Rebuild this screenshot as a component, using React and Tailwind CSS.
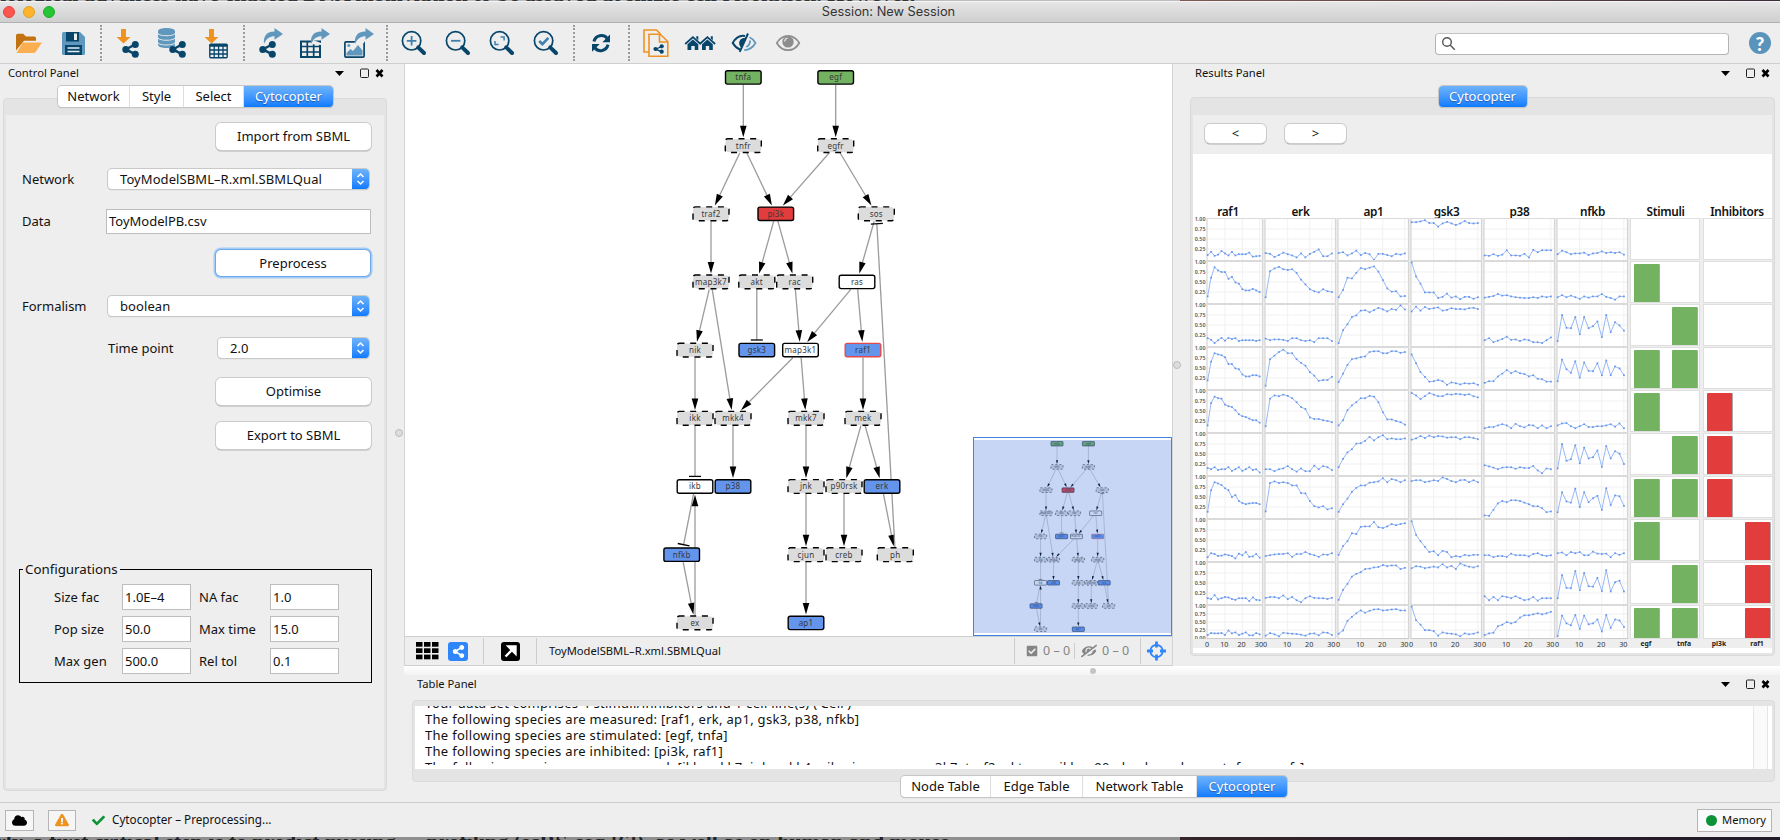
import React from "react";
import { FaCloud, FaCheck, FaExclamationTriangle, FaShareAlt, FaCheckSquare, FaEyeSlash } from "react-icons/fa";

const NAVY = "#08456b";
const SKY = "#5f97bd";
const ORANGE = "#ee9322";

/* ---------- toolbar icons ---------- */

function Icon({ x, w, className, children }) {
  return (
    <svg className={"shrink-0 " + className} width={w} height="36" viewBox={`${x} 25 ${w} 36`} fill="none">
      {children}
    </svg>
  );
}

function Sep({ className }) {
  return <div className={"h-9 w-0 shrink-0 border-l-2 border-dotted border-[#9a9a9a] " + className} />;
}

function Share({ x, y }) {
  return (
    <g transform={`translate(${x} ${y})`} fill={NAVY} stroke={NAVY}>
      <path d="M13.4 3.6 3.8 8.7l9.6 5" strokeWidth="2.4" fill="none" />
      <circle cx="3.8" cy="8.7" r="3.5" stroke="none" />
      <circle cx="13.3" cy="3.7" r="3.5" stroke="none" />
      <circle cx="13.3" cy="13.5" r="3.5" stroke="none" />
    </g>
  );
}

function DownArrow({ x }) {
  return <path d={`M${x + 4.5} 29h5v8h4.5l-7 6.5-7-6.5h4.5z`} fill={ORANGE} />;
}

function CurvedArrow({ x }) {
  return <path d={`M${x} 44c-.6-7 1.500-12.500 10.500-12.500V28l8.500 6-8.500 5.800v-3.600c-4.500 0-8 1.800-10.500 7.800z`} fill={SKY} />;
}

function Lens({ x, children }) {
  return (
    <g>
      <circle cx={x + 9.6} cy="40.800" r="9.200" stroke={NAVY} strokeWidth="1.700" />
      <path d={`M${x + 16.200} 47.400l5.800 5.600`} stroke={NAVY} strokeWidth="4" strokeLinecap="round" />
      {children}
    </g>
  );
}

function Toolbar() {
  return (
    <div className="flex h-[41px] shrink-0 items-center border-b border-[#cfcfcf] bg-[#eeeeee]">
      <Icon x={14} w={30} className="ml-[14px]">
        <path d="M16 50.500V35.500q0-1.700 1.700-1.700h5.500l2.700 2.700h8.400q1.700 0 1.700 1.700v2.600H24z" fill="#c27211" />
        <path d="M16.500 53l6.200-10.500H42L35.600 52q-.6 1-1.700 1z" fill="#fbae4f" />
      </Icon>
      <Icon x={60} w={26} className="ml-4">
        <path d="M62 33.500q0-1.500 1.500-1.500H80l5 5v16.500q0 1.500-1.500 1.500h-20Q62 55 62 53.500z" fill={SKY} />
        <path d="M66 32h13v9.500H66zM65 45h17v10H65z" fill={NAVY} />
        <path d="M74 33.500h3v6.500h-3z" fill="#eee" />
        <path d="M67.500 48h12M67.500 51.500h12" stroke="#e7eff5" strokeWidth="1.400" />
      </Icon>
      <Sep className="ml-[14px]" />
      <Icon x={115} w={26} className="ml-[13px]">
        <DownArrow x={116.500} />
        <Share x={122} y={40.700} />
      </Icon>
      <Icon x={156} w={32} className="ml-[15px]">
        <path d="M158 31.300c0-4.400 17-4.400 17 0v13.400c0 4.400-17 4.400-17 0z" fill={SKY} />
        <path d="M158 33.500c2 3 15 3 17 0M158 38c2 3 15 3 17 0M158 42.700c2 3 15 3 17 0" stroke="#eee" strokeWidth="1.100" />
        <Share x={169} y={40.700} />
      </Icon>
      <Icon x={202} w={28} className="ml-[14px]">
        <DownArrow x={204.500} />
        <rect x="209.800" y="44.300" width="17.400" height="13.400" rx="1" stroke={NAVY} strokeWidth="1.400" fill="#eee" />
        <path d="M209.500 45.500h18" stroke={NAVY} strokeWidth="2.500" />
        <path d="M210 50h17M210 54h17M214.200 45v13M218.600 45v13M223 45v13" stroke={NAVY} strokeWidth="1.300" />
      </Icon>
      <Sep className="ml-[13px]" />
      <Icon x={257} w={28} className="ml-[12px]">
        <CurvedArrow x={264} />
        <Share x={259} y={40.700} />
      </Icon>
      <Icon x={298} w={34} className="ml-[13px]">
        <rect x="301" y="41.500" width="19" height="15.500" stroke={NAVY} strokeWidth="2" />
        <path d="M301 46.500h19M301 52h19M307.300 42v15M313.700 42v15" stroke={NAVY} strokeWidth="1.700" />
        <path d="M311 44l2-4 8 3v2z" fill="#eee" />
        <CurvedArrow x={311} />
      </Icon>
      <Icon x={342} w={34} className="ml-[10px]">
        <rect x="344.900" y="41.900" width="19.200" height="15.200" stroke={NAVY} strokeWidth="1.700" rx="1" />
        <circle cx="348.800" cy="45.600" r="1.500" fill={SKY} />
        <path d="M346.500 55.500v-2.500l4-4 2.500 2 5-6 4.500 5.500v5z" fill={SKY} />
        <path d="M354 44l2-4 8 0v3z" fill="#eee" />
        <CurvedArrow x={355} />
      </Icon>
      <Sep className="ml-[10px]" />
      <Icon x={400} w={28} className="ml-[12px]">
        <Lens x={402}>
          <path d="M411.600 36v9.600M406.800 40.800h9.600" stroke="#3f7fae" strokeWidth="1.800" />
        </Lens>
      </Icon>
      <Icon x={444} w={28} className="ml-4">
        <Lens x={446}>
          <path d="M451 40.800h9.400" stroke="#3f7fae" strokeWidth="1.800" />
        </Lens>
      </Icon>
      <Icon x={488} w={28} className="ml-4">
        <Lens x={490}>
          <path d="M500.500 37h3.600v3.600M498.600 44.600H495V41" stroke="#3f7fae" strokeWidth="1.500" />
        </Lens>
      </Icon>
      <Icon x={532} w={28} className="ml-4">
        <Lens x={534}>
          <path d="M539.200 41l3.200 3.200 6-6.400" stroke="#3f7fae" strokeWidth="2.600" />
        </Lens>
      </Icon>
      <Sep className="ml-[13px]" />
      <Icon x={590} w={22} className="ml-[15px]">
        <path d="M594 41.500c1.500-6.500 9.500-7.800 13-3.300" stroke={NAVY} strokeWidth="3" />
        <path d="M610 34.500v7.700h-7.700z" fill={NAVY} />
        <path d="M608 44.700c-1.500 6.500-9.500 7.800-13 3.300" stroke={NAVY} strokeWidth="3" />
        <path d="M592 51.700V44h7.700z" fill={NAVY} />
      </Icon>
      <Sep className="ml-4" />
      <Icon x={641} w={28} className="ml-[11px]">
        <path d="M650 52h-6V30h12.500l4 4" stroke={ORANGE} strokeWidth="1.600" />
        <path d="M649 34.200v22h18.800V41.500l-7.600-7.300z" fill="#eee" stroke={ORANGE} strokeWidth="1.600" />
        <path d="M659.500 34.500v7.500h8" stroke={ORANGE} strokeWidth="1.600" />
        <path d="M662 46.500l-6.500 2.700 6.500 2.600" stroke={NAVY} strokeWidth="1.300" />
        <g fill={NAVY}>
          <circle cx="655.500" cy="49" r="2.100" />
          <circle cx="661.700" cy="46.300" r="2.100" />
          <circle cx="661.700" cy="51.700" r="2.100" />
        </g>
      </Icon>
      <Icon x={684} w={32} className="ml-[15px]">
        {[0, 14.500].map((d) => (
          <g key={d} transform={`translate(${d} 0)`}>
            <path d="M685.200 44l7.700-6.800 7.700 6.800" stroke={NAVY} strokeWidth="1.800" />
            <path d="M687.500 44.200l5.400-4.700 5.400 4.700v5.800h-3.600v-4h-3.400v4h-3.800zM696.300 36.200h2v4l-2-1.800z" fill={NAVY} />
          </g>
        ))}
      </Icon>
      <Icon x={730} w={28} className="ml-[14px]">
        <path d="M745 36c-5-.9-9.500 2-12.300 7 2 3.200 4 5.300 7.500 6.600" stroke={NAVY} strokeWidth="2" />
        <path d="M745.500 38c-4-.6-6.500 2-6.300 5.400.1 1.600.8 3 2 4z" fill={NAVY} />
        <path d="M748 33.500l-8.300 18.300" stroke={NAVY} strokeWidth="2" />
        <path d="M749.500 37.200c3 1.300 4.800 3.400 6 5.800-2.400 4.200-6 7-11.300 7.100M750 40.500c.2 3-1 5-3.700 6.600" stroke={SKY} strokeWidth="1.700" />
      </Icon>
      <Icon x={774} w={28} className="ml-4">
        <path d="M776.800 43c5.500-9.600 17-9.600 22.500 0-5.500 9.600-17 9.600-22.500 0z" stroke="#8d8d8d" strokeWidth="1.700" />
        <circle cx="788" cy="41.900" r="5.700" fill="#8d8d8d" />
        <path d="M784.600 41.500q.3-3 3-3.300" stroke="#eee" strokeWidth="1.100" />
      </Icon>
      <div className="ml-auto mt-[1px] flex h-[22px] w-[294px] shrink-0 items-center rounded-[4px] border border-[#b4b4b4] border-t-[#c4c4c4] bg-white pl-[5px]">
        <svg width="15" height="15" viewBox="0 0 15 15" fill="none" stroke="#555" strokeWidth="1.400">
          <circle cx="6" cy="6" r="4.300" />
          <path d="M9.300 9.300l4.500 4.500" />
        </svg>
      </div>
      <div className="mr-[9px] ml-5 flex size-[22px] items-center justify-center rounded-full bg-[#5b94bb] font-['Lato',sans-serif] text-[19px] leading-none font-black text-white">
        ?
      </div>
    </div>
  );
}

/* ---------- shared controls ---------- */

function PanelHeader({ title, className = "" }) {
  return (
    <div className={"flex shrink-0 items-center text-[11.200px] " + className}>
      <span>{title}</span>
      <svg className="ml-auto" width="50" height="14" viewBox="0 0 50 14">
        <path d="M0 5h9l-4.500 5z" fill="#000" />
        <rect x="25.500" y="3" width="8" height="8.500" rx="1" fill="none" stroke="#222" />
        <path d="M41.500 4l6 6.500M47.500 4l-6 6.500" stroke="#000" strokeWidth="2.600" />
      </svg>
    </div>
  );
}

function Tab({ label, active, className }) {
  return (
    <div
      className={
        "flex h-full items-center justify-center border-r border-[#dedede] last:border-r-0 " +
        (active
          ? "bg-linear-to-b from-[#6cb3fa] to-[#0a7bff] text-white [text-shadow:0_1px_1px_rgba(0,0,0,0.35)] "
          : "bg-white ") +
        className
      }
    >
      {label}
    </div>
  );
}

function Tabs({ children, className = "" }) {
  return (
    <div className={"z-10 flex h-[21px] overflow-hidden rounded-[4px] shadow-[0_0_0_1px_#c6c6c6,0_1px_1px_rgba(0,0,0,0.3)] " + className}>
      {children}
    </div>
  );
}

function Button({ children, focus, className = "" }) {
  return (
    <div
      className={
        "flex items-center justify-center rounded-[5px] bg-white " +
        (focus
          ? "shadow-[0_0_0_1px_#6fa9ee,0_0_0_2.500px_#a3cbf6] "
          : "shadow-[0_0_0_1px_#cbcbcb,0_1px_0_0.500px_#b0b0b0] ") +
        className
      }
    >
      {children}
    </div>
  );
}

function Select({ value, className = "" }) {
  return (
    <div className={"flex h-5 items-center overflow-hidden rounded-[4px] bg-white shadow-[0_0_0_1px_#c9c9c9,0_1px_1px_rgba(0,0,0,0.3)] " + className}>
      <span className="pl-3 tracking-[0.080px]">{value}</span>
      <div className="ml-auto flex h-full w-[17px] items-center justify-center bg-linear-to-b from-[#6cb3fa] to-[#0a7bff]">
        <svg width="9" height="14" viewBox="0 0 9 14" fill="none" stroke="#fff" strokeWidth="1.500">
          <path d="M1.500 5l3-3 3 3M1.500 9l3 3 3-3" />
        </svg>
      </div>
    </div>
  );
}

function Input({ value, className = "" }) {
  return <div className={"flex items-center border border-[#bdbdbd] bg-white pl-[2px] " + className}>{value}</div>;
}

/* ---------- control panel ---------- */

const CONFIG = [
  ["Size fac", "1.0E–4", "NA fac", "1.0"],
  ["Pop size", "50.0", "Max time", "15.0"],
  ["Max gen", "500.0", "Rel tol", "0.1"],
];

function ControlPanel() {
  return (
    <div className="flex w-[404px] shrink-0">
      <div className="flex w-[388px] shrink-0 flex-col pl-[3px]">
        <PanelHeader title="Control Panel" className="h-[18px] pr-[3px] pl-[5px]" />
        <div className="mt-[4px] flex justify-center">
          <Tabs className="w-[275px]">
            <Tab label="Network" className="w-[72px]" />
            <Tab label="Style" className="w-[54px]" />
            <Tab label="Select" className="w-[60px]" />
            <Tab label="Cytocopter" active className="w-[89px]" />
          </Tabs>
        </div>
        <div className="-mt-[9px] flex h-[693px] w-[384px] flex-col rounded-[4px] border border-[#dadada] bg-[#e4e4e4] p-[2px] pt-[16px]">
          <div className="flex flex-1 flex-col bg-[#eeeeee] pr-[13px] pl-4">
            <Button className="mt-[8px] h-[27px] w-[155px] self-end">Import from SBML</Button>
            <div className="mt-[19px] flex items-center">
              <span className="w-[86px]">Network</span>
              <Select value="ToyModelSBML–R.xml.SBMLQual" className="w-[261px]" />
            </div>
            <div className="mt-[20px] flex items-center">
              <span className="w-[84px]">Data</span>
              <Input value="ToyModelPB.csv" className="h-[25px] w-[265px]" />
            </div>
            <Button focus className="mt-[16px] mr-[1px] h-[26px] w-[154px] self-end">Preprocess</Button>
            <div className="mt-[20px] flex items-center">
              <span className="w-[86px]">Formalism</span>
              <Select value="boolean" className="w-[261px]" />
            </div>
            <div className="mt-[22px] flex items-center pl-[86px]">
              <span className="w-[110px]">Time point</span>
              <Select value="2.0" className="w-[151px]" />
            </div>
            <Button className="mt-[20px] h-[27px] w-[155px] self-end">Optimise</Button>
            <Button className="mt-[17px] h-[27px] w-[155px] self-end">Export to SBML</Button>
            <fieldset className="mt-[107px] -ml-[3px] h-[127px] w-[353px] border border-black pl-[34px]">
              <legend className="-ml-[31px] h-[26px] px-[2px] text-[13.300px] leading-[26px]">Configurations</legend>
              <div className="-mt-[11px] grid grid-cols-[68px_77px_71px_69px] gap-y-[6px] pt-[13px]">
                {CONFIG.flat().map((t, i) =>
                  i % 2 ? (
                    <Input key={i} value={t} className="h-[26px] w-[69px]" />
                  ) : (
                    <span key={i} className="flex items-center">{t}</span>
                  )
                )}
              </div>
            </fieldset>
          </div>
        </div>
      </div>
      <div className="flex flex-1 items-center pl-[7px]">
        <div className="size-[8px] rounded-full border border-[#bbb] bg-[#ddd]" />
      </div>
    </div>
  );
}

/* ---------- network graph ---------- */

const Y = [77.3, 145.5, 213.7, 281.8, 350, 418.2, 486.4, 554.6, 622.8];
const NODES = {
  tnfa: [743.3, 0, "g"], egf: [835.7, 0, "g"],
  tnfr: [743.3, 1], egfr: [835.7, 1],
  traf2: [711, 2], pi3k: [775.8, 2, "r"], sos: [876.3, 2],
  map3k7: [711, 3], akt: [756.8, 3], rac: [794.7, 3], ras: [857, 3, "w"],
  nik: [695, 4], gsk3: [756.8, 4, "b"], map3k1: [800.5, 4, "w"], raf1: [863, 4, "x"],
  ikk: [695, 5], mkk4: [733, 5], mkk7: [806, 5], mek: [863, 5],
  ikb: [695, 6, "w"], p38: [733, 6, "b"], jnk: [806, 6], p90rsk: [844, 6], erk: [882, 6, "b"],
  nfkb: [681.7, 7, "b"], cjun: [806, 7], creb: [844, 7], ph: [895.3, 7],
  ex: [695, 8], ap1: [806, 8, "b"],
};
const EDGES = [
  "tnfa tnfr", "egf egfr", "tnfr traf2", "tnfr pi3k", "egfr pi3k", "egfr sos", "traf2 map3k7", "pi3k akt", "pi3k rac",
  "sos ras", "map3k7 nik", "map3k7 mkk4", "akt gsk3 T", "rac map3k1", "ras map3k1", "ras raf1", "nik ikk", "map3k1 mkk4",
  "map3k1 mkk7", "raf1 mek", "ikk ikb T", "mkk4 p38", "mkk7 jnk", "mek p90rsk", "mek erk", "ikb nfkb T", "jnk cjun",
  "p90rsk creb", "erk ph", "ph sos T", "nfkb ex", "ex ikb", "cjun ap1",
];
const FILL = { g: "#72b260", r: "#e23c3c", w: "#ffffff", b: "#6495ed", x: "#6495ed" };

function Edge({ spec }) {
  const [a, b, kind] = spec.split(" ");
  const [x1, r1] = NODES[a];
  const [x2, r2] = NODES[b];
  const y1 = Y[r1];
  const y2 = Y[r2];
  const len = Math.hypot(x2 - x1, y2 - y1);
  const ux = (x2 - x1) / len;
  const uy = (y2 - y1) / len;
  const edge = Math.min(18.5 / Math.abs(ux || 1e-6), 7.5 / Math.abs(uy || 1e-6));
  const end = len - edge - (kind ? 2.5 : 0.8);
  const deg = (Math.atan2(uy, ux) * 180) / Math.PI;
  return (
    <g transform={`translate(${x1} ${y1}) rotate(${deg})`}>
      <path d={`M${edge} 0H${end - (kind ? 0 : 9)}`} stroke="#9b9b9b" strokeWidth="1.300" />
      {kind ? (
        <path d={`M${end} -6v12`} stroke="#000" strokeWidth="1.300" />
      ) : (
        <path d={`M${end} 0l-11.500 -3.300v6.600z`} fill="#000" />
      )}
    </g>
  );
}

function Graph() {
  return (
    <g>
      {EDGES.map((e) => (
        <Edge key={e} spec={e} />
      ))}
      {Object.entries(NODES).map(([name, [x, r, kind]]) => (
        <g key={name}>
          {kind ? (
            <rect x={x - 17.8} y={Y[r] - 6.6} width="35.600" height="13.400" rx="2" fill={FILL[kind]} stroke={kind === "x" ? "#e5484a" : "#000"} strokeWidth="1.400" />
          ) : (
            <g>
              <rect x={x - 18} y={Y[r] - 6.6} width="36" height="13.400" rx="4" fill="#dcdcdc" />
              <rect x={x - 18} y={Y[r] - 6.8} width="36" height="13.800" rx="2.500" fill="none" stroke="#000" strokeWidth="1.400" strokeDasharray="6 5.700" strokeDashoffset="1" />
            </g>
          )}
          <text x={x} y={Y[r] + 3} textAnchor="middle" fontSize="8" letterSpacing="0.250" fill="#383838">
            {name}
          </text>
        </g>
      ))}
    </g>
  );
}

function NetworkView() {
  return (
    <div className="flex w-[769px] shrink-0 flex-col border-r border-l border-[#d4d4d4]">
      <div className="relative h-[572px] bg-white">
        <svg width="767" height="572" viewBox="405 64 767 572">
          <Graph />
        </svg>
        <div className="absolute right-0 bottom-0 h-[199px] w-[199px] border border-[#3b84e8] bg-white py-[2px]">
          <svg width="197" height="193" viewBox="974 440 197 193">
            <g transform="translate(1057 443.700) scale(0.340) translate(-743.300 -77.300)">
              <Graph />
            </g>
            <rect x="974" y="440" width="197" height="193" fill="#3a70d8" opacity="0.290" />
          </svg>
        </div>
      </div>
      <div className="flex h-[30px] items-center border-t border-b border-[#cfcfcf] text-[11.200px]">
        <svg className="ml-[11px]" width="23" height="18" viewBox="0 0 23 18">
          {[0, 1, 2].map((r) => [0, 1, 2].map((c) => <rect key={r + "" + c} x={c * 8} y={r * 6.3} width="6.500" height="4.700" />))}
        </svg>
        <div className="ml-[9px] flex h-[19px] w-[20px] items-center justify-center rounded-[3px] bg-[#2f86fb] text-white">
          <FaShareAlt size={13} />
        </div>
        <div className="ml-[15px] h-[26px] w-px bg-[#cccccc]" />
        <svg className="ml-[17px]" width="19" height="19" viewBox="0 0 19 19">
          <rect width="19" height="19" rx="3" />
          <path d="M4.500 14.500L12 7M7.500 4.500h7v7z" stroke="#fff" strokeWidth="2.400" fill="#fff" />
        </svg>
        <div className="ml-[16px] h-[26px] w-px bg-[#cccccc]" />
        <span className="ml-[12px]">ToyModelSBML–R.xml.SBMLQual</span>
        <div className="ml-auto h-[26px] w-px bg-[#cccccc]" />
        <div className="flex w-[59px] items-center gap-[5px] pl-[11px] text-[12.500px] text-[#858585]">
          <FaCheckSquare size={12} />
          <span>0 – 0</span>
        </div>
        <div className="h-[16px] w-px bg-[#cccccc]" />
        <div className="flex w-[65px] items-center gap-[5px] pl-[6px] text-[12.500px] text-[#858585]">
          <FaEyeSlash size={16} className="-scale-x-100" />
          <span>0 – 0</span>
        </div>
        <div className="h-[26px] w-px bg-[#cccccc]" />
        <svg className="mr-[6px] ml-[6px]" width="19" height="20" viewBox="0 0 19 20" fill="none" stroke="#2f86fb">
          <circle cx="9.500" cy="10" r="6.200" strokeWidth="1.800" />
          <path d="M9.500 .5v6M9.500 13.500v6M0 10h6M13 10h6" strokeWidth="2.800" />
        </svg>
      </div>
    </div>
  );
}

/* ---------- results panel ---------- */

const SERIES = [
  ["10,18,8,11,20,14,9,18,9,12,12,12,16,6,7,8", "15,13,5,10,16,12,9,4,14,4,13,18,24,7,7,14", "15,17,9,14,21,10,15,12,-2,13,13,10,7,13,11,14", "92,92,94,97,90,90,81,89,93,89,85,89,95,90,89,90", "9,8,12,8,11,22,9,9,8,13,4,23,17,22,22,22", "12,21,17,12,14,14,16,10,14,15,19,15,17,15,17,11"],
  ["14,61,87,79,75,75,58,63,49,46,32,29,29,33,29,25", "12,77,84,88,82,80,82,73,56,44,32,27,24,32,27,25", "12,30,61,59,73,85,82,86,89,76,55,34,26,27,14,15", "99,64,46,24,24,24,10,13,21,11,14,7,13,13,8,12", "11,13,15,20,16,17,14,12,11,10,10,12,10,14,12,14", "12,17,12,16,12,8,14,11,14,14,20,13,10,6,14,14"],
  ["17,13,5,12,18,11,18,15,17,10,12,12,12,12,10,12", "16,12,14,14,13,10,17,17,12,10,12,7,17,17,17,10", "5,37,52,70,74,86,87,82,87,93,89,84,90,88,99,89", "84,96,86,95,90,92,94,86,88,92,90,90,89,92,93,90", "12,17,7,11,15,21,13,14,10,14,12,7,7,5,12,19", "10,75,43,42,70,27,70,42,47,59,20,75,32,57,49,36"],
  ["19,66,87,84,82,77,60,60,49,47,34,29,29,32,32,29", "6,72,81,90,96,87,87,72,63,56,40,31,18,20,20,28", "15,36,58,72,74,77,79,90,92,92,87,87,92,92,88,90", "84,62,40,28,16,17,20,17,8,14,12,9,12,11,12,8", "13,17,17,29,36,45,37,42,37,35,29,32,23,22,16,16", "17,71,47,38,67,26,64,43,42,62,32,69,32,54,49,32"],
  ["14,70,86,82,81,66,62,60,52,42,37,35,31,27,27,21", "12,81,89,87,91,88,82,72,60,55,34,30,30,27,25,22", "14,27,52,64,72,82,82,88,86,72,47,29,29,25,22,16", "95,89,80,87,95,91,87,87,92,91,93,92,90,92,87,84", "7,10,10,14,17,14,7,18,12,9,15,14,7,14,7,12", "14,19,20,12,7,12,17,10,10,12,12,14,17,11,19,7"],
  ["15,12,17,10,12,12,17,8,12,17,8,12,17,10,12,4", "12,12,7,12,14,20,12,6,14,7,7,21,12,20,17,10", "17,38,54,62,76,77,83,93,84,92,97,87,89,87,87,89", "86,89,95,90,96,92,95,94,91,92,92,87,92,92,90,87", "22,19,16,12,16,17,17,13,17,15,15,20,9,2,14,12", "14,75,33,37,72,27,66,39,42,59,18,70,39,57,51,25"],
  ["13,67,87,84,80,72,67,50,55,40,35,32,34,35,35,32", "14,85,89,85,87,85,79,79,60,59,40,27,24,27,19,22", "13,32,46,63,73,79,79,86,87,89,97,87,95,92,87,92", "90,92,92,87,89,92,90,99,95,90,87,92,93,87,92,87", "4,3,18,34,40,37,42,42,40,36,32,27,27,22,12,14", "12,62,39,36,71,25,62,37,47,53,18,72,30,54,52,28"],
  ["7,17,15,10,11,14,12,10,4,16,12,20,8,9,15,6", "10,12,14,15,15,17,8,15,15,20,15,12,8,14,13,17", "13,35,47,67,65,83,84,84,95,82,80,84,90,87,90,92", "97,63,47,33,20,22,12,23,20,7,10,8,13,11,13,13", "12,12,7,10,10,8,16,12,12,12,9,15,17,12,10,12", "17,19,12,20,17,20,12,12,21,16,15,16,7,17,13,17"],
  ["12,10,20,9,12,15,14,10,8,12,12,12,5,14,8,7", "13,15,15,12,19,10,15,7,2,12,17,13,12,12,10,13", "8,33,48,66,73,77,85,86,89,90,95,92,94,94,85,88", "87,92,91,87,89,91,89,97,89,93,85,99,94,91,89,92", "17,7,15,7,17,15,12,17,12,7,9,15,6,12,12,12", "12,70,38,37,80,32,75,42,41,63,30,82,29,52,56,29"],
  ["10,16,15,15,16,10,24,15,18,10,14,18,9,9,16,12", "8,16,12,6,17,15,14,13,11,8,14,15,9,18,17,10", "14,24,54,66,77,86,79,85,89,90,86,87,89,90,86,86", "98,56,42,25,25,22,8,18,15,14,12,6,15,12,14,18", "10,15,17,37,42,50,46,50,64,71,71,74,77,74,77,82", "7,70,46,40,72,29,70,43,46,58,21,72,32,58,55,35"],
];
/* egf, tnfa, pi3k, raf1 */
const CUES = ["0000", "1000", "0100", "1100", "1010", "0110", "1110", "1001", "0101", "1101"];
const COLS = "grid-cols-[14px_58px_73px_73px_73px_73px_73px_73px_70px]";

function Plot({ values, col, row }) {
  const last = row === 9;
  const w = col === 0 ? 58 : 73;
  const h = last ? 34 : 43;
  const base = last ? 33.2 : 41;
  const unit = last ? 0.323 : 0.4;
  const step = col === 0 ? 3.47 : 4.42;
  const pts = values.split(",").map((v, i) => [0.6 + i * step, base - v * unit]);
  return (
    <svg className="block overflow-visible" width={w} height={h} viewBox={`0 0 ${w} ${h}`}>
      <rect width={w} height={h} fill="#eeeeee" />
      <rect width={w - 2} height={h} fill="#fff" />
      {[25, 50, 75].map((v) => (
        <path key={v} d={`M0 ${base - v * unit}H${w - 3}`} stroke="#f1f1f1" />
      ))}
      {[5, 10, 15].map((v) => (
        <path key={v} d={`M${0.6 + v * step} 0V${h}`} stroke="#f1f1f1" />
      ))}
      <path d={`M0 ${h}V0M${w - 2.500} 0V${h}`} stroke="#d6d6d6" strokeWidth="1.200" />
      <path d={row === 0 ? `M0 .5H${w - 2}` : `M0 0H${w - 2}`} stroke="#dadada" strokeWidth={row === 0 ? 1 : 2} />
      {last && <path d={`M0 ${h - 0.5}H${w - 2}`} stroke="#cccccc" />}
      <polyline points={pts.map((p) => p.join(",")).join(" ")} fill="none" stroke="#98b9f4" strokeWidth="1" />
      {pts.map(([x, y], i) => (
        <rect key={i} x={x - 0.8} y={y - 0.8} width="1.700" height="1.700" fill="#6495ed" />
      ))}
    </svg>
  );
}

function Cue({ a, b, color, row, w }) {
  const last = row === 9;
  return (
    <div className={"flex h-full justify-between bg-[#eeeeee] " + (last ? "" : "pb-[1px]")}>
      <div className={"flex h-full justify-between border border-[#dfdfdf] bg-white pt-[2px] pr-[2px] pl-[3px] " + w}>
        {[a, b].map((on, i) => (
          <div key={i} className={"h-full w-[25px] rounded-t-[1px] " + (on === "1" ? color + " shadow-[1px_0_0_#a8a8a8]" : "")} />
        ))}
      </div>
    </div>
  );
}

function AxisLabels({ row }) {
  const last = row === 9;
  const base = last ? 33.2 : 41;
  const unit = last ? 0.323 : 0.4;
  return (
    <svg className="block overflow-visible" width="14" height={last ? 34 : 43}>
      {["0.25", "0.50", "0.75", "1.00"].concat(last ? ["0.00"] : []).map((t) => (
        <text key={t} x="12.500" y={base - t * 100 * unit + 2} textAnchor="end" fontSize="5.400" fontWeight="600" fill="#555">
          {t}
        </text>
      ))}
    </svg>
  );
}

const ticks = ["10", "20", "30"];

function ResultsPanel() {
  return (
    <div className="flex flex-1 flex-col pl-[6px]">
      <PanelHeader title="Results Panel" className="h-[18px] pr-[9px] pl-[5px]" />
      <div className="mt-[4px] flex justify-center pr-[5px]">
        <Tabs className="w-[88px]">
          <Tab label="Cytocopter" active className="w-full" />
        </Tabs>
      </div>
      <div className="-mt-[10px] flex h-[559px] w-[585px] flex-col rounded-[4px] border border-[#dadada] bg-[#e4e4e4] p-[2px] pt-[17px]">
        <div className="flex h-[39px] shrink-0 gap-[19px] bg-[#eeeeee] pt-[9px] pl-[12px]">
          <Button className="h-[19px] w-[61px]">&lt;</Button>
          <Button className="h-[19px] w-[61px]">&gt;</Button>
        </div>
        <div className="flex flex-1 flex-col bg-white">
          <div className={"grid h-[64px] items-end text-center text-[11.800px] leading-[14px] font-semibold tracking-[-0.300px] " + COLS}>
            <span />
            {["raf1", "erk", "ap1", "gsk3", "p38", "nfkb", "Stimuli", "Inhibitors"].map((t, i) => (
              <span key={t} className={i === 0 ? "-ml-4" : "-ml-[2px]"}>{t}</span>
            ))}
          </div>
          {SERIES.map((row, r) => (
            <div key={r} className={"grid " + (r === 9 ? "h-[34px] " : "h-[43px] ") + COLS}>
              <AxisLabels row={r} />
              {row.map((v, c) => (
                <Plot key={c} values={v} col={c} row={r} />
              ))}
              <Cue a={CUES[r][0]} b={CUES[r][1]} row={r} color="bg-[#72b260]" w="w-[70px]" />
              <Cue a={CUES[r][2]} b={CUES[r][3]} row={r} color="bg-[#e23c3c]" w="w-[70px]" />
            </div>
          ))}
          <div className={"grid h-[9px] bg-[#eeeeee] text-[6.800px] leading-[9px] text-[#222] " + COLS}>
            <span />
            {[0, 1, 2, 3, 4, 5].map((c) => (
              <svg key={c} className="block overflow-visible" width="58" height="9" fontSize="7.200" fill="#333">
                <text x="0" y="7.500" textAnchor="middle">0</text>
                {ticks.map((t, i) => (
                  <text key={t} x={(c === 0 ? 17.3 : 22.1) * (i + 1)} y="7.500" textAnchor="middle">{t}</text>
                ))}
              </svg>
            ))}
            <div className="flex font-bold text-center"><span className="w-[32px]">egf</span><span className="ml-[6px] w-[32px]">tnfa</span></div>
            <div className="flex font-bold text-center"><span className="w-[32px]">pi3k</span><span className="ml-[6px] w-[32px]">raf1</span></div>
          </div>
        </div>
      </div>
    </div>
  );
}

/* ---------- table panel ---------- */

function TablePanel() {
  return (
    <div className="flex flex-1 flex-col">
      <div className="flex h-[9px] shrink-0 items-center bg-linear-to-b from-[#ffffff] to-[#f3f3f3]">
        <div className="ml-[686px] size-[6px] rounded-full bg-[#c4c4c4]" />
      </div>
      <PanelHeader title="Table Panel" className="h-[18px] pr-[9px] pl-[13px]" />
      <div className="mt-[7px] ml-[8px] flex h-[82px] w-[1363px] shrink-0 flex-col rounded-[4px] border border-[#dadada] bg-[#e4e4e4] px-[2px] pt-[5px]">
        <div className="flex h-[63px] shrink-0 bg-white">
          <div className="relative h-[59px] flex-1 overflow-hidden">
            <div className="absolute -top-[11px] left-[10px] text-[13px] leading-4 tracking-[0.300px] whitespace-pre">
              <div>Your data set comprises 4 stimuli/inhibitors and 1 cell line(s) ('Cell')</div>
              <div>The following species are measured: [raf1, erk, ap1, gsk3, p38, nfkb]</div>
              <div>The following species are stimulated: [egf, tnfa]</div>
              <div>The following species are inhibited: [pi3k, raf1]</div>
              <div>The following species are unmeasured: [ikk, mkk7, jnk, mkk4, nik, cjun, ras, map3k7, traf2, akt, sos, ikb, p90rsk, ph, mek, rac, tnfr, ex, egfr]</div>
            </div>
          </div>
          <div className="w-[15px] border-r border-l border-[#e6e6e6] bg-[#fafafa]" />
          <div className="w-[4px]" />
        </div>
      </div>
      <div className="-mt-[6px] flex justify-center pl-[4px]">
        <Tabs className="w-[386px]">
          <Tab label="Node Table" className="w-[90px]" />
          <Tab label="Edge Table" className="w-[92px]" />
          <Tab label="Network Table" className="w-[114px]" />
          <Tab label="Cytocopter" active className="w-[90px]" />
        </Tabs>
      </div>
    </div>
  );
}

export default function App() {
  return (
    <div className="flex h-[840px] w-[1780px] flex-col overflow-hidden bg-[#eeeeee] font-['Noto_Sans',sans-serif] text-[13px] leading-none text-[#111]">
      <div className="relative h-px shrink-0 overflow-hidden bg-[#bdbdbd]">
        <div className="absolute -top-[16px] -left-[6px] font-['Liberation_Serif',serif] text-[22px] leading-[20px] font-bold whitespace-nowrap text-[#333]">
          nological advances have enabled DNA methylation to be assayed at single cell resolution. However,
        </div>
        <div className="absolute top-0 right-0 h-px w-[600px] bg-linear-to-r from-[#7d5a52] to-[#3b2d3a]" />
      </div>
      <div className="relative flex h-[22px] shrink-0 items-center justify-center border-t border-b border-t-[#f4f4f4] border-b-[#b1b1b1] bg-linear-to-b from-[#e6e6e6] to-[#cfcfcf] font-['Inter',sans-serif] text-[12.800px] text-[#333]">
        <div className="absolute left-[3px] flex gap-2">
          <div className="size-3 rounded-full border border-[#e0443e] bg-[#fc5650]" />
          <div className="size-3 rounded-full border border-[#dfa023] bg-[#fdb42b]" />
          <div className="size-3 rounded-full border border-[#1dad2b] bg-[#27c435]" />
        </div>
        <span className="-ml-[3px] pt-[1px]">Session: New Session</span>
      </div>
      <Toolbar />
      <div className="flex h-[738px] shrink-0">
        <ControlPanel />
        <div className="flex flex-1 flex-col">
          <div className="flex h-[602px] shrink-0">
            <NetworkView />
            <div className="flex w-[11px] shrink-0 items-center">
              <div className="mb-[1px] size-[8px] rounded-full border border-[#bbb] bg-[#ddd]" />
            </div>
            <ResultsPanel />
          </div>
          <TablePanel />
        </div>
      </div>
      <div className="flex h-[35px] shrink-0 items-center border-t border-[#cdcdcd] text-[11.700px]">
        <div className="ml-[5px] flex h-[21px] w-[29px] items-center justify-center border border-[#b5b5b5] bg-[#f6f6f6] text-black">
          <FaCloud size={15} />
        </div>
        <div className="ml-[14px] flex h-[21px] w-[28px] items-center justify-center border border-[#b5b5b5] bg-[#f6f6f6] text-[#ee9322]">
          <FaExclamationTriangle size={14} />
        </div>
        <FaCheck size={13} className="ml-[16px] text-[#0c9338]" />
        <span className="ml-[7px]">Cytocopter – Preprocessing...</span>
        <div className="mr-[8px] ml-auto flex h-[23px] w-[75px] items-center border border-[#b5b5b5] bg-[#fafafa] pl-[8px] text-[11.200px]">
          <div className="mr-[5px] size-[11px] rounded-full bg-[#0c9338]" />
          <span>Memory</span>
        </div>
      </div>
      <div className="relative h-[3px] shrink-0 overflow-hidden bg-[#8f8f8f]">
        <div className="absolute top-0 -left-[4px] flex gap-[31px] font-['Liberation_Serif',serif] text-[22px] leading-[10px] font-bold whitespace-nowrap text-[#222]">
          <span>rly, a first critical step is to predict missing</span>
          <span>profiling (scRS-seq [6]), as well as on human and mouse</span>
        </div>
        <div className="absolute top-0 right-0 h-[3px] w-[600px] bg-linear-to-r from-[#35242a] to-[#221a28]" />
      </div>
    </div>
  );
}
